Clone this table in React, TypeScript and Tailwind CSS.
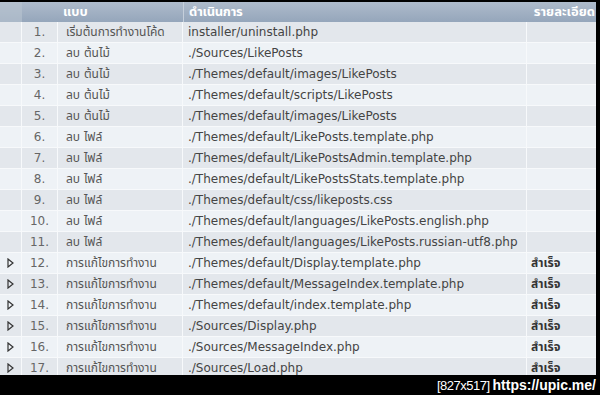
const rows: { type: string; action: string; ok?: boolean }[] = [
  { type: "เริ่มต้นการทำงานโค้ด", action: "installer/uninstall.php" },
  { type: "ลบ ต้นไม้", action: "./Sources/LikePosts" },
  { type: "ลบ ต้นไม้", action: "./Themes/default/images/LikePosts" },
  { type: "ลบ ต้นไม้", action: "./Themes/default/scripts/LikePosts" },
  { type: "ลบ ต้นไม้", action: "./Themes/default/images/LikePosts" },
  { type: "ลบ ไฟล์", action: "./Themes/default/LikePosts.template.php" },
  { type: "ลบ ไฟล์", action: "./Themes/default/LikePostsAdmin.template.php" },
  { type: "ลบ ไฟล์", action: "./Themes/default/LikePostsStats.template.php" },
  { type: "ลบ ไฟล์", action: "./Themes/default/css/likeposts.css" },
  { type: "ลบ ไฟล์", action: "./Themes/default/languages/LikePosts.english.php" },
  { type: "ลบ ไฟล์", action: "./Themes/default/languages/LikePosts.russian-utf8.php" },
  { type: "การแก้ไขการทำงาน", action: "./Themes/default/Display.template.php", ok: true },
  { type: "การแก้ไขการทำงาน", action: "./Themes/default/MessageIndex.template.php", ok: true },
  { type: "การแก้ไขการทำงาน", action: "./Themes/default/index.template.php", ok: true },
  { type: "การแก้ไขการทำงาน", action: "./Sources/Display.php", ok: true },
  { type: "การแก้ไขการทำงาน", action: "./Sources/MessageIndex.php", ok: true },
  { type: "การแก้ไขการทำงาน", action: "./Sources/Load.php", ok: true },
]

const Arrow = () => (
  <svg width="7" height="10" viewBox="0 0 7 10" className="text-[#333]">
    <path d="M1 1 L6 5 L1 9 Z" fill="none" stroke="currentColor" strokeWidth="1.2" />
  </svg>
)

const App = () => {
  return (
    <div className="w-[600px] h-[395px] bg-black overflow-hidden" style={{ fontFamily: '"DejaVu Sans", "Noto Sans Thai", "Noto Sans", sans-serif' }}>
      <div className="pt-[2px] pr-[4px] h-[375px] overflow-hidden">
        {/* header */}
        <div className="grid grid-cols-[22px_36px_125px_344px_1fr] h-[20px] bg-gradient-to-b from-[#aebbcb] to-[#95a6bb] text-white font-bold text-[13px] leading-[20px]">
          <div className="bg-[#b9c4d0]/60" />
          <div />
          <div className="pl-[5px]">แบบ</div>
          <div className="pl-[5px] border-l border-[#c5cfdb] tracking-[-0.3px]">ดำเนินการ</div>
          <div className="text-right pr-[1px]">รายละเอียด</div>
        </div>

        {/* rows */}
        {rows.map((row, i) => (
          <div
            key={i}
            className={`grid grid-cols-[22px_36px_125px_344px_1fr] h-[21px] border-b border-[#f7f9fb] text-[12px] leading-[20px] text-[#444] ${i % 2 === 0 ? "bg-[#e3e7ec]" : "bg-[#eef2f6]"}`}
          >
            <div className="flex items-center justify-center border-r border-[#f7f9fb]">{row.ok && <Arrow />}</div>
            <div className="text-center text-[#666] border-r border-[#f7f9fb]">{i + 1}.</div>
            <div className="pl-[8px] text-[12px] text-[#555] border-r border-[#f7f9fb] whitespace-nowrap overflow-hidden">{row.type}</div>
            <div className="pl-[5px] border-r border-[#f7f9fb] whitespace-nowrap overflow-hidden">{row.action}</div>
            <div className="pl-[4px] font-bold text-[12px] text-[#333]">{row.ok ? "สำเร็จ" : ""}</div>
          </div>
        ))}
      </div>

      {/* watermark */}
      <div className="h-[20px] flex items-center justify-end pr-[4px] text-white leading-none">
        <span className="text-[13px] tracking-[-0.5px]" style={{ fontFamily: '"Liberation Sans", sans-serif' }}>[827x517]</span>
        <span className="font-bold text-[14px] ml-[3px]" style={{ fontFamily: '"Liberation Sans", sans-serif' }}>https://upic.me/</span>
      </div>
    </div>
  )
}

export default App
